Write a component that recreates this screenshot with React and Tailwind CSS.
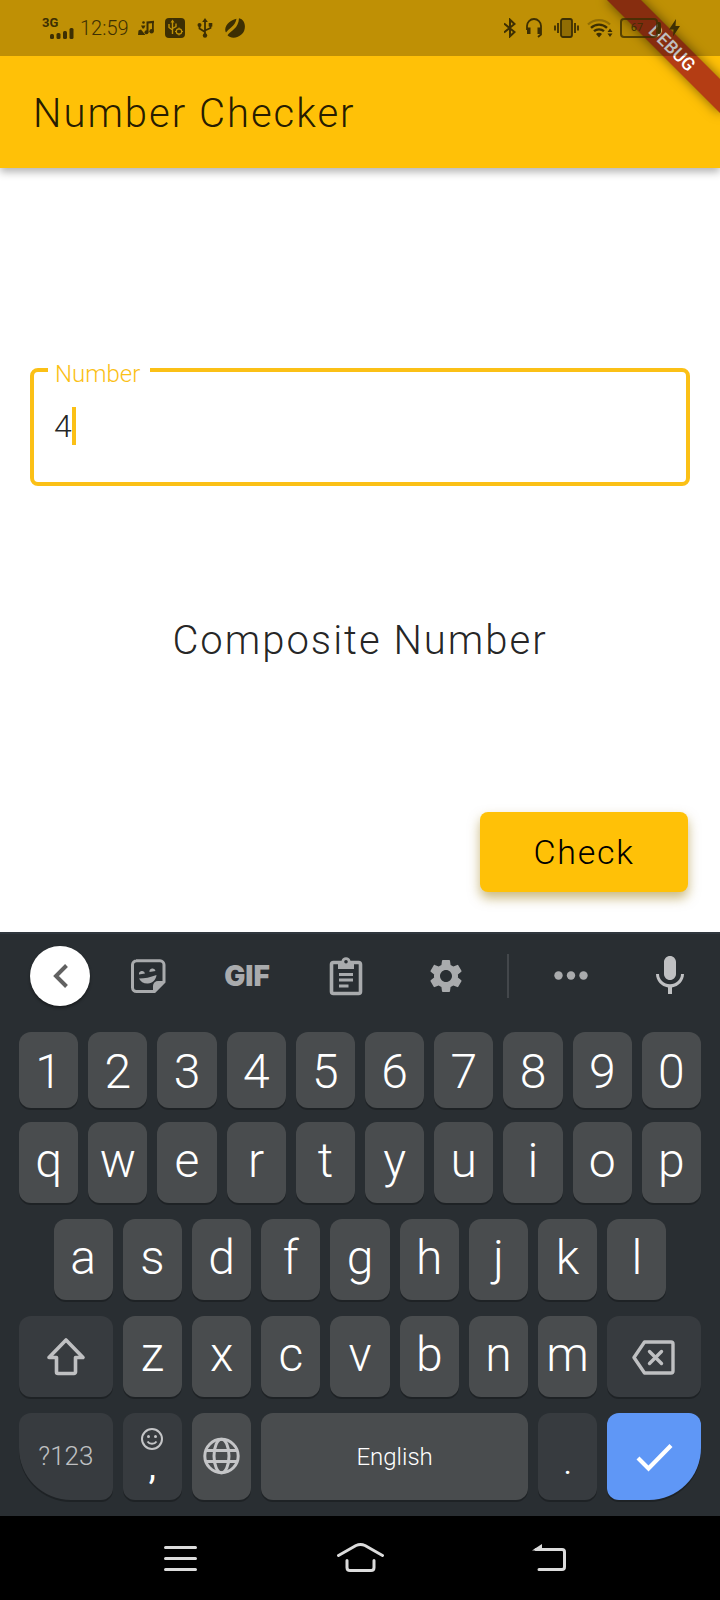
import { useState } from "react";
import { MdSettings } from "react-icons/md";

const INK = "#3d2f03";

function StatusBar() {
  return (
    <div className="absolute inset-x-0 top-0 flex h-14 items-center justify-between bg-black/25 pl-[42px] pr-10 text-[#3d2f03]">
      <div className="flex items-center">
        <div className="flex w-8 flex-col">
          <span className="text-[13px] font-bold leading-[11px]">3G</span>
          <svg className="ml-2 h-3 w-6" viewBox="0 0 24 12" fill={INK}>
            <rect x="0" y="6" width="4" height="5" rx="1.5" />
            <rect x="6.500" y="5" width="4" height="6" rx="1.500" />
            <rect x="13" y="3" width="4" height="8" rx="1.500" />
            <rect x="19.500" y="0" width="4" height="11" rx="1.500" />
          </svg>
        </div>
        <span className="ml-[6px] w-[50px] text-xl font-light leading-7">12:59</span>
        <svg className="ml-2 h-5 w-4 shrink-0" viewBox="0 0 16 20" fill={INK}>
          <path d="M8.500 3.500 16 2.800v2.200l-5.500.6V14h-2z" />
          <path d="M14 4h1.800v9H14z" />
          <circle cx="13.600" cy="13.200" r="2.200" />
          <circle cx="8.500" cy="14.300" r="2" />
          <circle cx="5.500" cy="4.500" r="1.300" />
          <path d="M3 7.500h4.500L6 10.500H4.500zM.5 12.500 3 11.500l4.500 5.500H0z" />
        </svg>
        <svg className="ml-[11px] size-5" viewBox="0 0 20 20" fill="none">
          <rect width="20" height="20" rx="4" fill={INK} />
          <g stroke="#bf9107" strokeWidth="1.400">
            <path d="M7.500 3v13M4 6v3.500l3.500 2.500M11 5.500v3l-3.500 2" />
            <circle cx="14" cy="13.500" r="2.600" />
            <path d="M14 9.500v8M10 13.500h1.400M16.600 13.500H18" strokeWidth="1" />
          </g>
          <path d="M7.500 1.500 9.500 4.500h-4z" fill="#bf9107" />
          <circle cx="14" cy="13.500" r="1.800" fill={INK} />
        </svg>
        <svg className="ml-3 h-5 w-4" viewBox="0 0 16 20" fill="none" stroke={INK} strokeWidth="1.800">
          <path d="M8 3v14M2.500 8v2.500L8 14M13.500 7v3L8 12.500" />
          <path d="M8 0 10.800 4H5.200z" fill={INK} stroke="none" />
          <circle cx="2.500" cy="7" r="2" fill={INK} stroke="none" />
          <rect x="11.700" y="5" width="3.600" height="3.600" fill={INK} stroke="none" />
          <circle cx="8" cy="17.500" r="2.200" fill={INK} stroke="none" />
        </svg>
        <svg className="ml-3 size-5" viewBox="0 0 20 20" fill={INK}>
          <path d="M11.500.7C7 1.800.5 5.500.2 11.500c0 1.200.3 2.300.8 3C3.500 10.500 10 8.500 11.500.7z" />
          <path d="M14 .2C21 1.500 21.500 11.500 17 16c-4.500 4.500-11.500 4.800-14.500 1.200C6 12.500 13.500 10.500 14 .2z" />
        </svg>
      </div>
      <div className="flex items-center">
        <svg className="h-5 w-3" viewBox="0 0 12 20" fill="none" stroke={INK} strokeWidth="2">
          <path d="M0 5.500 10.500 14 6 18.300V1.700L10.500 6 0 14.500" />
        </svg>
        <svg className="ml-[10px] h-5 w-4" viewBox="0 0 16 20" fill="none" stroke={INK} strokeWidth="1.800">
          <path d="M1 12V8a7 7 0 0 1 14 0v8.500L12 19" />
          <path d="M1 9.500h3.500V16H1zM11.500 9.500H15V16h-3.500z" fill={INK} stroke="none" />
        </svg>
        <svg className="ml-3 h-5 w-[25px]" viewBox="0 0 25 20" fill="none" stroke={INK} strokeWidth="1.800">
          <rect x="7" y="1" width="11" height="18" rx="2" fill="#3d2f03" fillOpacity=".35" />
          <path d="M4 5v10M21 5v10M1 7.500v5M24 7.500v5" />
        </svg>
        <svg className="ml-2 h-5 w-[26px]" viewBox="0 0 26 20" fill="none" stroke={INK} strokeWidth="2.300">
          <path d="M1 6.500a16 16 0 0 1 22 0" opacity=".35" />
          <path d="M4 9.800a11.500 11.500 0 0 1 16 0M7 13.200a7.500 7.500 0 0 1 10 0" />
          <path d="M9 16a4 4 0 0 1 6 0l-3 3.500z" fill={INK} stroke="none" />
          <path d="m23 10.500 2.500 3.500h-5zM23 19l2.500-3.500h-5z" fill={INK} stroke="none" />
        </svg>
        <div className="ml-[7px] flex h-5 w-[38px] items-center justify-center rounded-[4px] border-2 border-[#3d2f03]/80 bg-black/5 pr-1 text-[11px] leading-3">
          67
        </div>
        <div className="h-3 w-[3px] rounded-r-[2px] bg-[#3d2f03]" />
        <svg className="ml-2 h-5 w-[11px]" viewBox="0 0 11 20" fill={INK}>
          <path d="M7 1 0 11.500h4.500L4 18.500 11 8H6.500z" />
        </svg>
      </div>
    </div>
  );
}

function Header() {
  return (
    <header className="relative z-10 bg-[#ffc107] pt-14 shadow-[0_4px_8px_rgba(0,0,0,0.3)]">
      <h1 className="px-[33px] pb-[30px] pt-[34px] text-[40px] font-light leading-[48px] tracking-wider text-black/87">
        Number Checker
      </h1>
      <div className="absolute inset-0 overflow-hidden">
        <div className="absolute -right-8 top-9 flex h-6 w-40 rotate-45 items-center justify-center bg-[#b43d14] text-lg font-medium leading-6 text-white shadow-[0_0_12px_rgba(0,0,0,0.5)]">
          DEBUG
        </div>
      </div>
      <StatusBar />
    </header>
  );
}

function Toolbar() {
  const cell = "flex h-15 flex-1 items-center justify-center";
  return (
    <div className="flex items-center pb-[26px] pl-[30px] pt-[14px] text-[#a9abad]">
      <button aria-label="Back" className="mr-2 flex size-15 items-center justify-center rounded-full bg-white shadow-[0_2px_3px_rgba(0,0,0,0.4)]">
        <svg className="size-8" viewBox="0 0 32 32" fill="none" stroke="#616161" strokeWidth="4">
          <path d="M22.500 5.500 12 16l10.500 10.500" />
        </svg>
      </button>
      <button aria-label="Stickers" className={cell}>
        <svg className="size-9" viewBox="0 0 36 36" fill="none">
          <path d="M6 2.800h24a4 4 0 0 1 4 4V24l-9.500 9.500H6.500a4 4 0 0 1-4-4V6.800a4 4 0 0 1 4-4z" stroke="currentColor" strokeWidth="3" />
          <path d="M34 23h-6a5 5 0 0 0-5 5v6z" fill="currentColor" />
          <path d="M9 16.500a3 3 0 0 1 6-1zM19.500 14a3 3 0 0 1 6-1zM9 20.500c6 0 11-1 17.500-3.500-.5 5-4 8-8.500 8.500-4 .3-7.500-1.800-9-5z" fill="currentColor" />
        </svg>
      </button>
      <button className={cell + " font-['Inter',sans-serif] text-[28px] font-black leading-8"}>GIF</button>
      <button aria-label="Clipboard" className={cell}>
        <svg className="h-10 w-9" viewBox="0 0 36 40" fill="none">
          <rect x="3.500" y="6.500" width="29" height="31" rx="2" stroke="currentColor" strokeWidth="3.600" />
          <path d="M10 5h3.500a4.600 4.600 0 0 1 9 0H26v8H10z" fill="currentColor" />
          <circle cx="18" cy="5.800" r="1.800" fill="#292e32" />
          <path d="M11 18.500h14M11 24h14M11 30h9.500" stroke="currentColor" strokeWidth="3.200" />
        </svg>
      </button>
      <button aria-label="Settings" className={cell}>
        <MdSettings className="size-10" />
      </button>
      <div className="mx-3 h-11 w-[2px] bg-[#43474b]" />
      <button aria-label="More" className={cell}>
        <svg className="h-9 w-9" viewBox="0 0 36 36" fill="currentColor">
          <circle cx="5.500" cy="17.500" r="4.200" />
          <circle cx="18" cy="17.500" r="4.200" />
          <circle cx="30.500" cy="17.500" r="4.200" />
        </svg>
      </button>
      <button aria-label="Voice input" className={cell + " text-[#bfc0c2]"}>
        <svg className="size-12" viewBox="0 0 24 24" fill="currentColor">
          <path d="M12 14c1.660 0 3-1.340 3-3V5c0-1.660-1.340-3-3-3S9 3.340 9 5v6c0 1.660 1.340 3 3 3zm5.500-3c0 3-2.540 5.100-5.500 5.100S6.500 14 6.500 11H5c0 3.410 2.720 6.230 6 6.720V21h2v-3.280c3.280-.48 6-3.300 6-6.720h-1.500z" />
        </svg>
      </button>
    </div>
  );
}

const keyBase = "flex items-center justify-center rounded-xl shadow-[0_2px_0_#1e2225] text-white ";
const light = "bg-[#494c4e] ";
const dark = "bg-[#373b3f] ";
const rowBase = "grid grid-cols-[repeat(20,minmax(0,1fr))] gap-[10px] ";

function Letter({ children, first }) {
  return (
    <button className={keyBase + light + "col-span-2 h-[81px] pb-1 text-5xl font-light " + (first ? "col-start-2" : "")}>
      {children}
    </button>
  );
}

function Keyboard() {
  return (
    <section aria-label="Keyboard" className="border-t-2 border-[#30373e] bg-[#292e32]">
      <div className="-mt-[2px]">
        <Toolbar />
      </div>
      <div className="flex flex-col gap-4 px-[19px] pb-4">
        <div className="flex flex-col gap-[14px]">
          <div className={rowBase}>
            {"1234567890".split("").map((k) => (
              <button key={k} className={keyBase + light + "col-span-2 h-[76px] pt-1 text-5xl font-light"}>
                {k}
              </button>
            ))}
          </div>
          <div className={rowBase}>
            {"qwertyuiop".split("").map((k) => (
              <Letter key={k}>{k}</Letter>
            ))}
          </div>
        </div>
        <div className={rowBase}>
          {"asdfghjkl".split("").map((k, i) => (
            <Letter key={k} first={i === 0}>
              {k}
            </Letter>
          ))}
        </div>
        <div className={rowBase}>
          <button aria-label="Shift" className={keyBase + dark + "col-span-3"}>
            <svg className="size-10" viewBox="0 0 40 40" fill="none" stroke="#bfc0c2" strokeWidth="3.600" strokeLinejoin="round">
              <path d="M20 3 37 20.500h-7.500V35a1.500 1.500 0 0 1-1.500 1.500H12a1.500 1.500 0 0 1-1.500-1.500V20.500H3z" />
            </svg>
          </button>
          {"zxcvbnm".split("").map((k) => (
            <Letter key={k}>{k}</Letter>
          ))}
          <button aria-label="Backspace" className={keyBase + dark + "col-span-3"}>
            <svg className="h-9 w-11" viewBox="0 0 44 36" fill="none" stroke="#bfc0c2" strokeWidth="3.400" strokeLinejoin="round" strokeLinecap="round">
              <path d="M12.500 3H39a2 2 0 0 1 2 2v27a2 2 0 0 1-2 2H12.500L2 18.500z" />
              <path d="m17.500 12.500 12 12M29.500 12.500l-12 12" />
            </svg>
          </button>
        </div>
        <div className={rowBase}>
          <button className={keyBase + dark + "col-span-3 h-[87px] rounded-bl-[52px] text-[26px] font-light text-[#bfc0c2]!"}>?123</button>
          <button className={keyBase + dark + "col-span-2 flex-col justify-start! pt-[14px]"}>
            <svg className="size-6" viewBox="0 0 24 24" fill="none" stroke="#c4c5c7" strokeWidth="2">
              <circle cx="12" cy="12" r="10" />
              <path d="M7.500 14.500a5.500 5.500 0 0 0 9 0" />
              <circle cx="8.500" cy="9.500" r="1.500" fill="#c4c5c7" stroke="none" />
              <circle cx="15.500" cy="9.500" r="1.500" fill="#c4c5c7" stroke="none" />
            </svg>
            <span className="text-4xl leading-8">,</span>
          </button>
          <button aria-label="Change language" className={keyBase + light + "col-span-2"}>
            <svg className="size-10" viewBox="0 0 40 40" fill="none" stroke="#c4c5c7" strokeWidth="3">
              <circle cx="19.500" cy="19" r="16.700" />
              <ellipse cx="19.500" cy="19" rx="7.500" ry="16.700" />
              <path d="M4 13.500h31M4 24.500h31" />
            </svg>
          </button>
          <button className={keyBase + light + "col-span-8 text-2xl font-light"}>English</button>
          <button className={keyBase + dark + "col-span-2 items-end! pb-5 text-3xl leading-8"}>.</button>
          <button aria-label="Done" className={keyBase + "col-span-3 rounded-br-[52px] bg-[#5f97f6]"}>
            <svg className="size-10" viewBox="0 0 40 40" fill="none" stroke="white" strokeWidth="4.200">
              <path d="m4 21 10.500 10.500L37 8.500" />
            </svg>
          </button>
        </div>
      </div>
    </section>
  );
}

function NavBar() {
  const item = "flex items-center justify-center";
  return (
    <nav className="grid h-[84px] grid-cols-3 bg-black px-[90px]">
      <button aria-label="Recent apps" className={item}>
        <svg className="h-8 w-16" viewBox="0 0 64 32" stroke="#dcdcdc" strokeWidth="3" strokeLinecap="round">
          <path d="M17.500 5.500h30M17.500 16.500h30M17.500 27.500h30" />
        </svg>
      </button>
      <button aria-label="Home" className={item}>
        <svg className="h-8 w-16" viewBox="0 0 64 32" fill="none" stroke="#dcdcdc" strokeWidth="3" strokeLinecap="round" strokeLinejoin="round">
          <path d="M10.500 13.500 28 3.500Q32.500 1.500 37 3.500L54.500 13.500M19 18.500v7q0 3 3 3h21q3 0 3-3v-7" />
        </svg>
      </button>
      <button aria-label="Back" className={item}>
        <svg className="h-8 w-16" viewBox="0 0 64 32" fill="none" stroke="#dcdcdc" strokeWidth="3" strokeLinecap="round" strokeLinejoin="round">
          <path d="M28 7.500h26q2.500 0 2.500 2.500v15q0 2.500-2.500 2.500H31" />
          <path d="M24 8.500 34 2v6.500z" fill="#dcdcdc" stroke="none" />
        </svg>
      </button>
    </nav>
  );
}

export default function App() {
  const [value, setValue] = useState("4");
  return (
    <div className="flex min-h-screen flex-col bg-white font-['Roboto',sans-serif]">
      <Header />
      <main className="flex flex-1 flex-col justify-end px-[30px] pb-10">
        <fieldset className="h-[134px] rounded-lg border-4 border-[#fbc016] pl-[14px]">
          <legend className="h-9 pl-[7px] pr-[10px] pt-2 text-2xl font-light leading-7 text-[#fbc016]">
            <label htmlFor="number">Number</label>
          </legend>
          <div className="flex items-center pl-[6px] pt-[19px]">
            <input
              id="number"
              inputMode="numeric"
              value={value}
              onChange={(e) => setValue(e.target.value)}
              className="[field-sizing:content] text-[32px] font-light leading-[38px] text-black/87 caret-transparent outline-none"
            />
            <span className="h-[38px] w-1 bg-[#fbc016]" />
          </div>
        </fieldset>
        <output htmlFor="number" className="mt-[131px] text-center text-[40px] font-light leading-[48px] tracking-wider text-black/87">
          Composite Number
        </output>
        <button className="mr-[2px] mt-[147px] h-20 w-52 self-end rounded-lg bg-[#ffc107] text-[34px] font-light tracking-wider text-black shadow-[0_6px_12px_rgba(150,115,0,0.5)]">
          Check
        </button>
      </main>
      <Keyboard />
      <NavBar />
    </div>
  );
}
